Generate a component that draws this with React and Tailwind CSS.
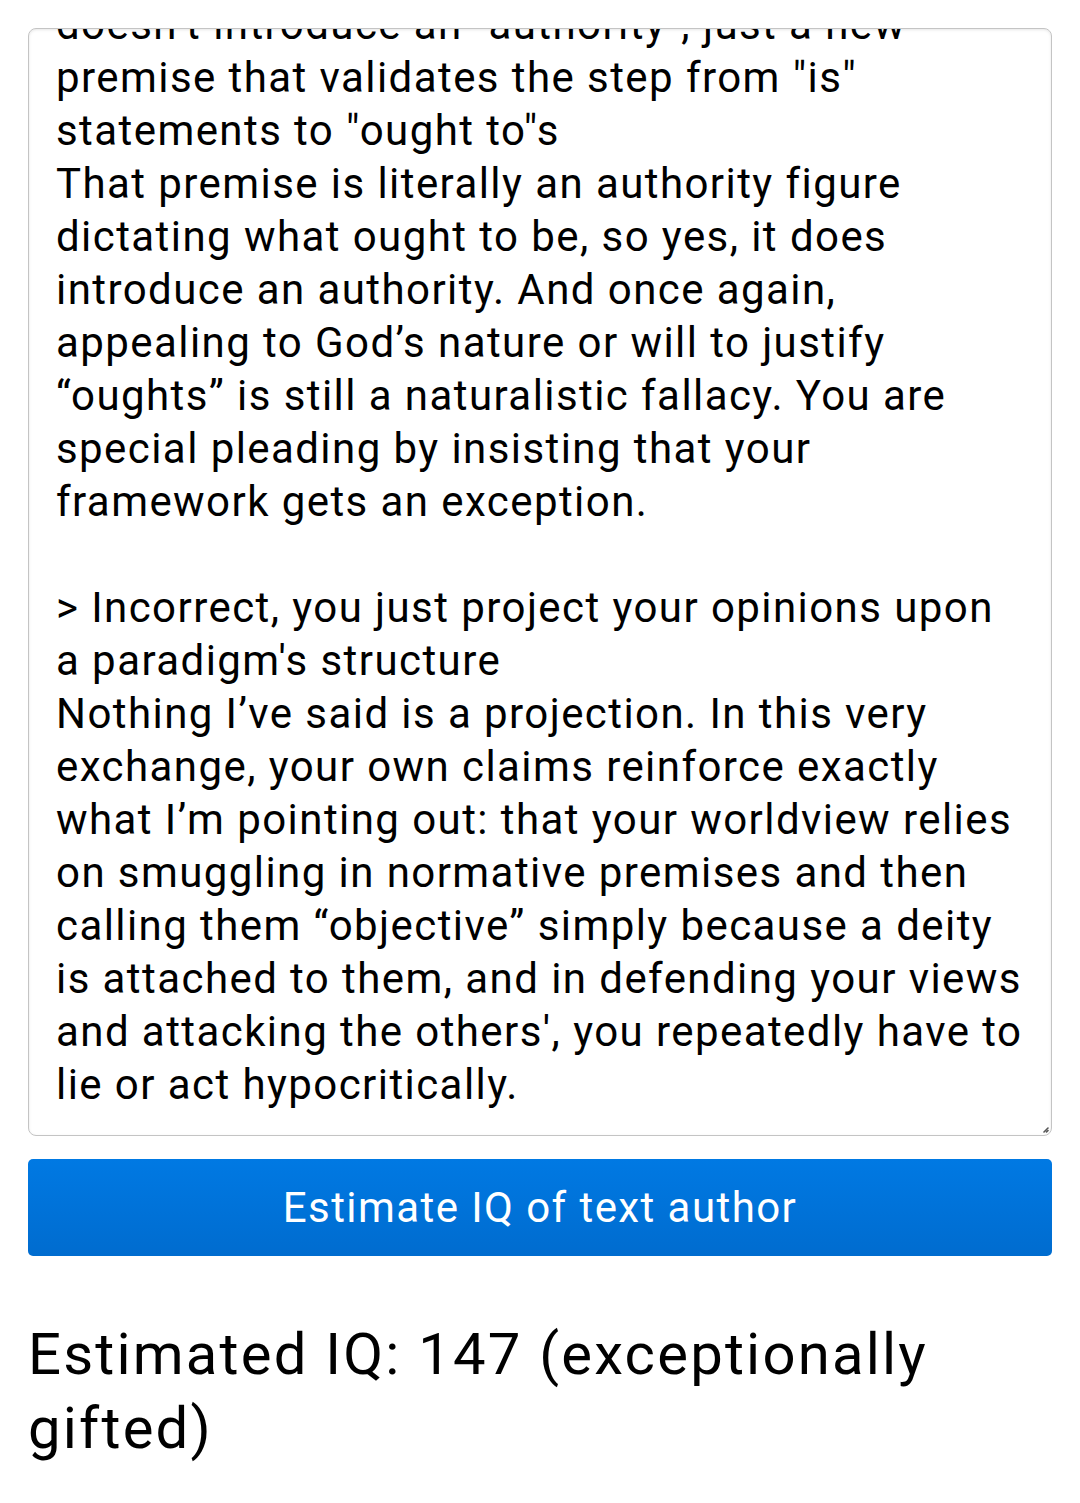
import React from 'react';

const lines = [
  'doesn\u2019t introduce an "authority", just a new',
  'premise that validates the step from "is"',
  'statements to "ought to"s',
  'That premise is literally an authority figure',
  'dictating what ought to be, so yes, it does',
  'introduce an authority. And once again,',
  'appealing to God\u2019s nature or will to justify',
  '\u201coughts\u201d is still a naturalistic fallacy. You are',
  'special pleading by insisting that your',
  'framework gets an exception.',
  '',
  "> Incorrect, you just project your opinions upon",
  "a paradigm's structure",
  'Nothing I\u2019ve said is a projection. In this very',
  'exchange, your own claims reinforce exactly',
  'what I\u2019m pointing out: that your worldview relies',
  'on smuggling in normative premises and then',
  'calling them \u201cobjective\u201d simply because a deity',
  'is attached to them, and in defending your views',
  "and attacking the others', you repeatedly have to",
  'lie or act hypocritically.',
];

export default function App() {
  return (
    <div className="min-h-screen bg-white px-[28px] pt-[28px] text-black" style={{ fontFamily: 'Roboto, "Noto Sans", sans-serif' }}>
      {/* Text box */}
      <div className="relative h-[1108px] overflow-hidden rounded-[8px] border border-[#c4c4c4] shadow-[inset_0_1px_3px_rgba(0,0,0,0.1)]">
        <div className="-mt-[31px] pl-[27px] pr-[10px] text-[42px] leading-[53px] tracking-[0.034em]">
          {lines.map((l, i) => (
            <div key={i} className="whitespace-pre">{l || '\u00a0'}</div>
          ))}
        </div>
        <svg className="absolute bottom-[2px] right-[2px]" width="6" height="6" viewBox="0 0 6 6">
          <path d="M5 1 L1 5 M5 3.5 L3.5 5" stroke="#555" strokeWidth="1.6" strokeLinecap="round" />
        </svg>
      </div>

      {/* Button */}
      <button className="mt-[23px] flex h-[97px] w-full items-center justify-center rounded-[5px] bg-gradient-to-b from-[#0079e3] to-[#006ccf] text-[42px] tracking-[0.034em] text-white">
        Estimate IQ of text author
      </button>

      {/* Result */}
      <h2 className="mt-[61px] pr-[10px] text-[58px] font-normal leading-[74px] tracking-[0.038em]">
        Estimated IQ: 147 (exceptionally gifted)
      </h2>
    </div>
  );
}
